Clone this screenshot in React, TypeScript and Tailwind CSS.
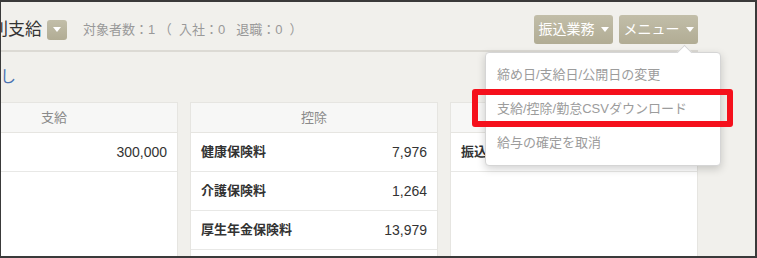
import { useState } from "react";

const font = { fontFamily: '"Liberation Sans", "Noto Sans CJK JP", sans-serif' };

const deductions = [
  { label: "健康保険料", value: "7,976" },
  { label: "介護保険料", value: "1,264" },
  { label: "厚生年金保険料", value: "13,979" },
  { label: "雇用保険料", value: "900" },
];

const menuItems = [
  "締め日/支給日/公開日の変更",
  "支給/控除/勤怠CSVダウンロード",
  "給与の確定を取消",
];

const Caret = () => (
  <span className="inline-block ml-[6px] w-0 h-0 border-l-[4px] border-r-[4px] border-t-[5px] border-l-transparent border-r-transparent border-t-white" />
);

const Panel = ({ title, children }: { title: string; children?: React.ReactNode }) => (
  <div className="bg-white border border-[#e6e5e1] h-[170px]">
    <div className="h-[30px] bg-[#f7f7f6] border-b border-[#e6e5e1] flex items-center justify-center text-[13px] text-[#8a8a8a]">
      {title}
    </div>
    {children}
  </div>
);

const App = () => {
  const [open] = useState(true);

  return (
    <div
      className="relative w-[757px] h-[258px] overflow-hidden bg-[#f1f0ec] border-t-2 border-r-2 border-b-2 border-l border-[#3a3a3a]"
      style={font}
    >
      <div className="ml-[-71px] w-[768px]">
        {/* Header */}
        <div className="flex items-center justify-between pt-[13px] pb-[6px]">
          <div className="flex items-center">
            <h1 className="ml-[44px] text-[17px] leading-none text-[#333]">個別支給</h1>
            <button className="ml-[5px] w-[20px] h-[20px] rounded-[3px] bg-linear-to-b from-[#c2bea9] to-[#b1ac94] flex items-center justify-center">
              <span className="w-0 h-0 border-l-[4px] border-r-[4px] border-t-[5px] border-l-transparent border-r-transparent border-t-white" />
            </button>
            <span className="ml-[16px] text-[13px] text-[#999] whitespace-pre">
              対象者数：1 （  入社：0   退職：0  ）
            </span>
          </div>

          <div className="relative flex gap-[6px]">
            <button className="h-[29px] w-[79px] rounded-[3px] bg-linear-to-b from-[#c2bea9] to-[#b1ac94] text-white text-[14px] flex items-center justify-center">
              振込業務
              <Caret />
            </button>
            <button className="h-[29px] w-[79px] rounded-[3px] bg-linear-to-b from-[#c2bea9] to-[#b1ac94] text-white text-[14px] flex items-center justify-center">
              メニュー
              <Caret />
            </button>

            {open && (
              <div className="absolute top-[37px] right-[-23px] w-[236px] z-10 bg-white border border-[#d5d5d5] rounded-[4px] shadow-[0_3px_8px_rgba(0,0,0,0.18)] py-[5px]">
                <span className="absolute top-[-6px] left-[193px] w-[11px] h-[11px] rotate-45 bg-white border-l border-t border-[#d5d5d5]" />
                {menuItems.map((item) => (
                  <div key={item} className="relative h-[34px] px-[11px] flex items-center text-[13px] text-[#9c9c9c]">
                    {item}
                  </div>
                ))}
              </div>
            )}
          </div>
        </div>

        <div className="h-[2px] bg-[#dcdad4]" />

        {/* Back link */}
        <div className="h-[50px] flex items-center">
          <a className="ml-[22px] text-[16px] text-[#4a72b0]">差し戻し</a>
        </div>

        {/* Panels */}
        <div className="grid grid-cols-3 gap-3">
          <Panel title="支給">
            <div className="h-[39px] border-b border-[#e8e8e6] px-[10px] flex items-center justify-between text-[14px] text-[#333]">
              <span className="font-bold text-[13px]">基本給</span>
              <span>300,000</span>
            </div>
          </Panel>
          <Panel title="控除">
            {deductions.map((d) => (
              <div key={d.label} className="h-[39px] border-b border-[#e8e8e6] px-[10px] flex items-center justify-between text-[14px] text-[#333]">
                <span className="font-bold text-[13px]">{d.label}</span>
                <span>{d.value}</span>
              </div>
            ))}
          </Panel>
          <Panel title="">
            <div className="h-[39px] border-b border-[#e8e8e6] px-[10px] flex items-center justify-between text-[14px] text-[#333]">
              <span className="font-bold text-[13px]">振込額</span>
              <span>277,881</span>
            </div>
          </Panel>
        </div>
      </div>

      {/* Annotation */}
      <div className="absolute left-[471px] top-[87px] w-[261px] h-[38px] border-[6px] border-[#f5101c] rounded-[3px] z-20" />
    </div>
  );
};

export default App;
